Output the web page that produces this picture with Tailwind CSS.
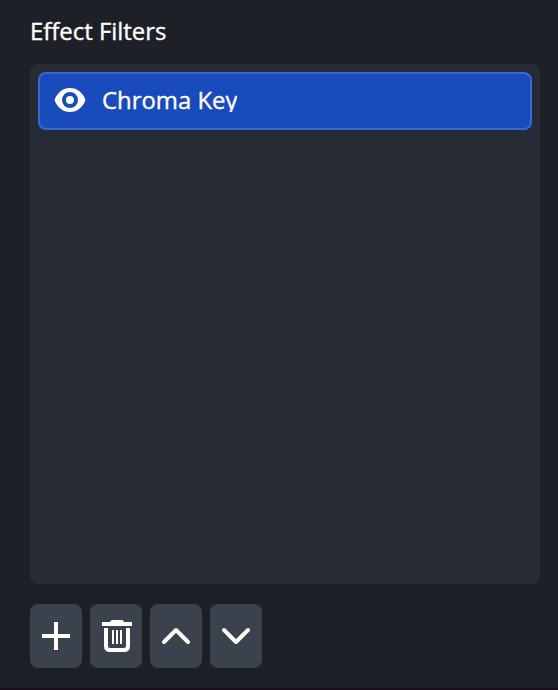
<!DOCTYPE html>
<html lang="en">
<head>
<meta charset="utf-8">
<title>Effect Filters</title>
<script src="https://cdn.jsdelivr.net/npm/@tailwindcss/browser@4"></script>
</head>
<body class="bg-[#1d2027]">
<main class="flex h-[690px] w-[558px] flex-col border-b-2 border-[#180f1b] bg-[#1d2027] pt-[15px] pr-[18px] pl-[30px] font-['Open_Sans','Noto_Sans',sans-serif] text-[23.9px] text-white [-webkit-text-stroke:0.35px_white]">
  <h1 class="h-[49px] leading-[32px] whitespace-nowrap"><span>Effect Filters</span></h1>
  <section class="h-[520px] rounded-lg bg-[#272b35] p-2">
    <div class="flex h-[58px] items-start gap-4 rounded-lg border-2 border-[#3868d8] bg-[#1a4bbd] pt-2.5 pl-3.5">
      <svg class="h-8 w-8 shrink-0" viewBox="0 0 32 32" fill="none">
        <path d="M16 4C9 4 3.200 8.500 .5 16C3.200 23.500 9 28 16 28S28.800 23.500 31.500 16C28.800 8.500 23 4 16 4Z" fill="white"/>
        <circle cx="16" cy="16" r="6" stroke="#1a4bbd" stroke-width="4"/>
      </svg>
      <span class="mt-1 h-6 overflow-hidden leading-[23px] whitespace-nowrap">Chroma Key</span>
    </div>
  </section>
  <div class="mt-5 flex gap-2">
    <button aria-label="Add" class="h-16 w-[52px] rounded-lg bg-[#3c414e]">
      <svg class="h-16 w-[52px]" viewBox="0 0 52 64" fill="none" stroke="white" stroke-width="4"><path d="M12 32H40M26 18V46"/></svg>
    </button>
    <button aria-label="Remove" class="h-16 w-[52px] rounded-lg bg-[#3c414e]">
      <svg class="h-16 w-[52px]" viewBox="0 0 52 64" fill="none" stroke="white"><path d="M12 18H20C20.500 16.600 21.500 16 23 16H31C32.500 16 33.500 16.600 34 18H42V22H12Z" fill="white" stroke="none"/><path d="M16 24V42Q16 46 20 46H34Q38 46 38 42V24" stroke-width="4"/><path d="M23 26V40M27 26V40M31 26V40" stroke-width="2"/></svg>
    </button>
    <button aria-label="Move up" class="h-16 w-[52px] rounded-lg bg-[#3c414e]">
      <svg class="h-16 w-[52px]" viewBox="0 0 52 64" fill="none" stroke="white" stroke-width="4" stroke-linecap="round" stroke-linejoin="round"><path d="M14 38L26 26L38 38"/></svg>
    </button>
    <button aria-label="Move down" class="h-16 w-[52px] rounded-lg bg-[#3c414e]">
      <svg class="h-16 w-[52px]" viewBox="0 0 52 64" fill="none" stroke="white" stroke-width="4" stroke-linecap="round" stroke-linejoin="round"><path d="M14 26L26 38L38 26"/></svg>
    </button>
  </div>
</main>
</body>
</html>
